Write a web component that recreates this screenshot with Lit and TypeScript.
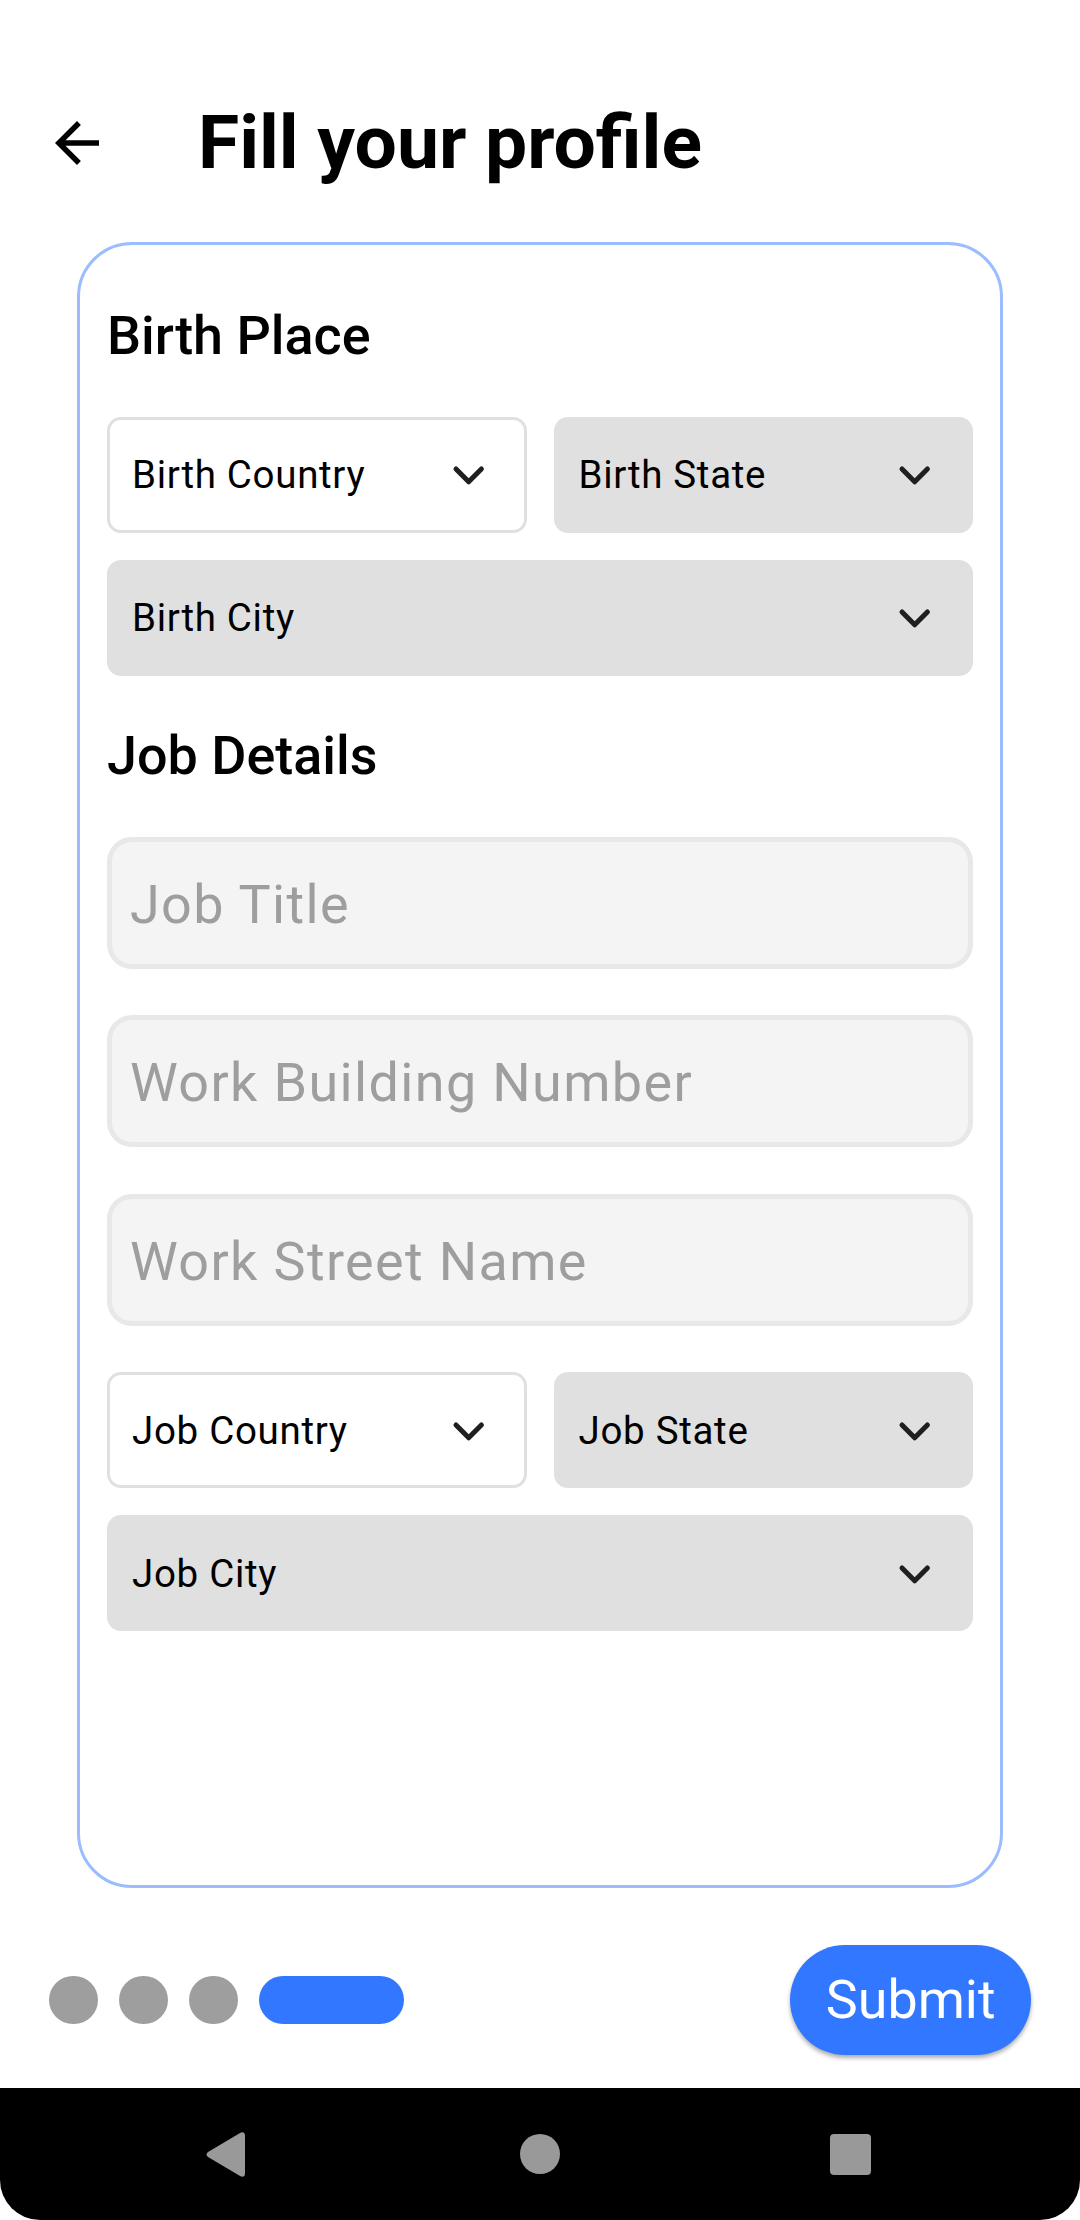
import { LitElement, html, css } from "lit";
import { customElement, property } from "lit/decorators.js";
import { classMap } from "lit/directives/class-map.js";

@customElement("select-box")
class SelectBox extends LitElement {
  @property() label = "";
  @property({ type: Boolean }) disabled = false;
  static styles = css`
    :host { display: block; flex: 1; min-width: 0; }
    .box {
      box-sizing: border-box; height: 116px; display: flex; align-items: center;
      justify-content: space-between; padding: 0.4px 36px 0 22px;
      border: 3px solid #e0e0e0; border-radius: 14px; background: #fff;
    }
    .off { background: #e0e0e0; }
    .label { font-size: 38.5px; line-height: 46px; letter-spacing: 0.69px; color: #000; white-space: nowrap; }
    svg { display: block; width: 38px; height: 38px; }
  `;
  render() {
    return html`<div class=${classMap({ box: true, off: this.disabled })}>
      <span class="label">${this.label}</span>
      <svg viewBox="0 0 38 38" fill="none" stroke="#1f1f1f" stroke-width="5" stroke-linecap="round" stroke-linejoin="round">
        <path d="M6 13 L18.700 25.800 L31.400 13" />
      </svg>
    </div>`;
  }
}

@customElement("text-box")
class TextBox extends LitElement {
  @property() placeholder = "";
  static styles = css`
    :host { display: block; }
    .box {
      box-sizing: border-box; height: 132px; display: flex; align-items: center;
      padding: 3px 18px 0; border: 5px solid #e8e8e8; border-radius: 25px; background: #f4f4f4;
      font-size: 53.9px; letter-spacing: 1.375px; color: #9e9e9e; white-space: nowrap;
    }
  `;
  render() {
    return html`<div class="box">${this.placeholder}</div>`;
  }
}

@customElement("app-root")
class AppRoot extends LitElement {
  static styles = css`
    :host {
      display: flex; flex-direction: column; box-sizing: border-box;
      width: 1080px; height: 2220px; background: #fff; font-family: Roboto, sans-serif; color: #000;
    }
    .header { display: flex; align-items: center; height: 154px; padding: 66px 0 0 44px; }
    .back { width: 66px; height: 66px; display: block; }
    .title { margin: 0 0 2px 88px; font-size: 75px; line-height: 88px; font-weight: 700; white-space: nowrap; }
    .card {
      box-sizing: border-box; margin: 22px 77px 0 77px; height: 1646px; padding: 58px 27px 0;
      border: 3px solid #9bbcff; border-radius: 55px; display: flex; flex-direction: column;
    }
    .heading { margin: 0; height: 66px; line-height: 66px; font-size: 53.9px; font-weight: 500; white-space: nowrap; }
    .group { display: flex; flex-direction: column; gap: 27px; }
    .birth { margin: 48px 0 47px; }
    .row { display: flex; gap: 27px; }
    .fields { display: flex; flex-direction: column; gap: 46.25px; margin: 48px 0 46.9px; }
    .footer { flex: 1; display: flex; align-items: center; justify-content: space-between; padding: 24px 49px 0 49.4px; }
    .steps { display: flex; gap: 21.5px; }
    .dot { width: 48.5px; height: 48.5px; border-radius: 25px; background: #9e9e9e; }
    .active { width: 144.5px; background: #3177ff; }
    .submit {
      width: 240.6px; height: 110px; border: 0; padding: 0; border-radius: 55px; background: #3177ff; color: #fff;
      font: 400 53.8px/110px Roboto, sans-serif; box-shadow: 0 3px 4px rgba(0, 0, 0, 0.32);
    }
    .corners { background: #fff; }
    .nav { height: 132px; background: #000; border-radius: 0 0 40px 40px; }
    .nav svg { display: block; width: 1080px; height: 132px; }
  `;
  render() {
    return html`
      <div class="header">
        <svg class="back" viewBox="0 0 24 24"><path d="M20 11H7.83l5.59-5.59L12 4l-8 8 8 8 1.41-1.41L7.83 13H20v-2z" /></svg>
        <h1 class="title">Fill your profile</h1>
      </div>
      <div class="card">
        <h2 class="heading">Birth Place</h2>
        <div class="group birth">
          <div class="row">
            <select-box label="Birth Country"></select-box>
            <select-box label="Birth State" disabled></select-box>
          </div>
          <select-box label="Birth City" disabled></select-box>
        </div>
        <h2 class="heading">Job Details</h2>
        <div class="fields">
          ${["Job Title", "Work Building Number", "Work Street Name"].map(
            (name) => html`<text-box placeholder=${name}></text-box>`
          )}
        </div>
        <div class="group">
          <div class="row">
            <select-box label="Job Country"></select-box>
            <select-box label="Job State" disabled></select-box>
          </div>
          <select-box label="Job City" disabled></select-box>
        </div>
      </div>
      <div class="footer">
        <div class="steps">
          <div class="dot"></div>
          <div class="dot"></div>
          <div class="dot"></div>
          <div class="dot active"></div>
        </div>
        <button class="submit">Submit</button>
      </div>
      <div class="corners">
        <div class="nav">
          <svg viewBox="0 0 1080 132" fill="#999">
            <path d="M208 64 L240.500 44.700 Q245 43.200 245 48 V85 Q245 90 240.500 88.300 L208 69 Q205 66.500 208 64Z" />
            <circle cx="540" cy="66" r="20" />
            <rect x="830" y="46" width="41" height="41" rx="4" />
          </svg>
        </div>
      </div>
    `;
  }
}
